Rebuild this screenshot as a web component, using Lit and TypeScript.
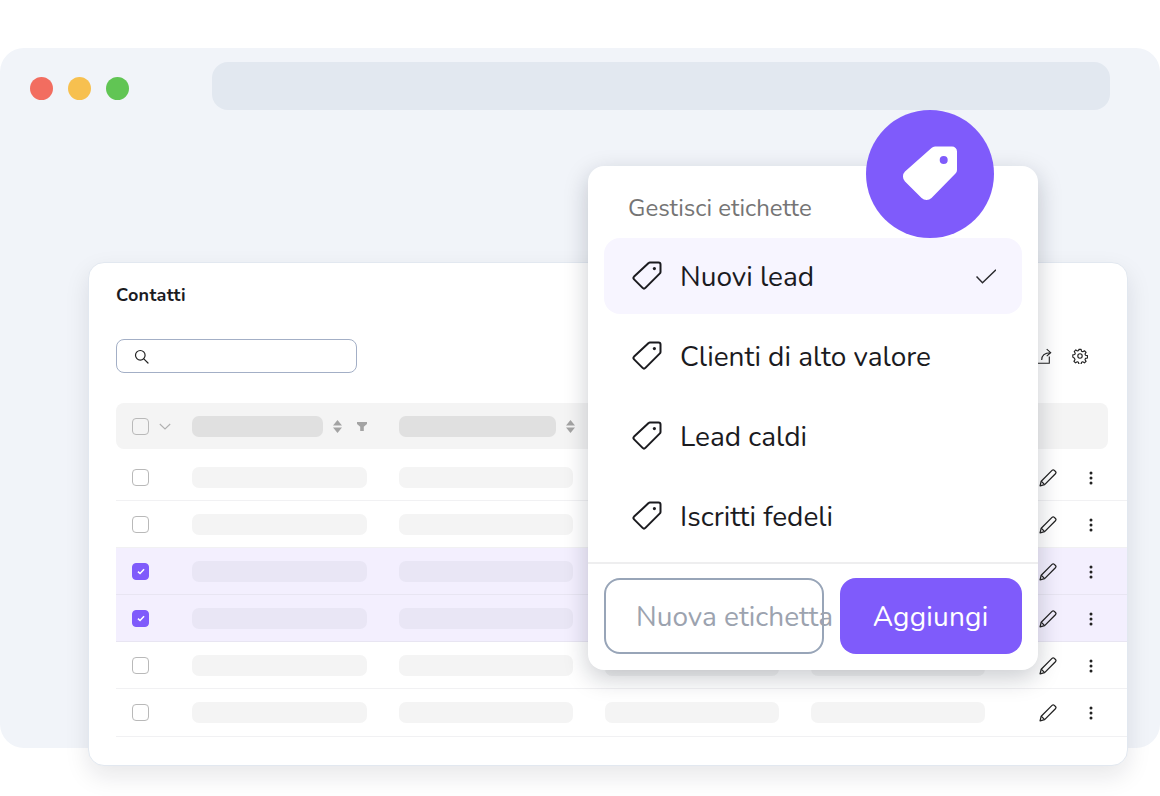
import { LitElement, html, css } from "lit";
import { customElement } from "lit/decorators.js";

const tagOutline = html`<svg class="tag" width="30" height="30" viewBox="0 0 30 30" fill="none" stroke="#1b1b1f" stroke-width="2" stroke-linejoin="round">
  <path d="M18 1.500H26.500a2 2 0 0 1 2 2V11a2 2 0 0 1-.6 1.400L13.400 26.900a2 2 0 0 1-2.800 0L2.100 18.400a2 2 0 0 1 0-2.800L16.600 2.100a2 2 0 0 1 1.400-.6Z"/>
  <circle cx="22.400" cy="7.600" r="1.600" fill="#1b1b1f" stroke="none"/>
</svg>`;

const sortIcon = html`<svg class="ic" width="9" height="13" viewBox="0 0 9 13" fill="#a3a3a3"><path d="M4.500 0 9 5.500H0Z"/><path d="M4.500 13 0 7.500h9Z"/></svg>`;
const filterIcon = html`<svg class="ic filter" width="10" height="9" viewBox="0 0 10 9" fill="#a3a3a3"><path d="M0 0h10v2L6.800 4.800V9H3.200V4.800L0 2Z"/></svg>`;
const pencil = html`<svg width="18" height="18" viewBox="0.500 0.500 17 17" fill="none" stroke="#222" stroke-width="1.200" stroke-linejoin="round"><path d="M1.500 16.500 2.600 12 12.800 1.800a1.600 1.600 0 0 1 2.200 0l1 1a1.600 1.600 0 0 1 0 2.200L5.800 15.300Z"/><path d="M2.600 12 5.800 15.300"/></svg>`;
const dots = html`<svg width="4" height="14" viewBox="0 0 4 14" fill="#222"><circle cx="2" cy="2" r="1.500"/><circle cx="2" cy="7" r="1.500"/><circle cx="2" cy="12" r="1.500"/></svg>`;

const rows = [false, false, true, true, false, false];
const labels = ["Nuovi lead", "Clienti di alto valore", "Lead caldi", "Iscritti fedeli"];

@customElement("app-root")
export class AppRoot extends LitElement {
  static styles = css`
    :host { display: block; width: 1160px; height: 796px; padding-top: 48px; box-sizing: border-box; overflow: hidden; background: #fff; font-family: "Nunito", "Noto Sans", sans-serif; color: #1b1b1f; }
    .window { position: relative; height: 700px; background: #f1f4f9; border-radius: 24px; }
    .chrome { display: flex; align-items: flex-start; padding: 14px 50px 0 30px; }
    .dot { width: 23px; height: 23px; border-radius: 50%; margin: 15px 15px 0 0; }
    .red { background: #f26d60; } .yellow { background: #f7c04f; } .green { background: #61c554; }
    .url { flex: 1; height: 48px; margin-left: 68px; border-radius: 16px; background: #e2e8f0; }
    .card { box-sizing: border-box; width: 1040px; height: 504px; margin: 152px 0 0 88px; padding: 20px 0 0 27px; background: #fff; border: 1px solid #e2e8f0; border-radius: 16px; box-shadow: 0 10px 24px rgba(15,23,42,.10); }
    h2 { margin: 0; font-size: 18px; line-height: 24px; font-weight: 700; letter-spacing: .3px; }
    .toolbar { display: flex; justify-content: space-between; align-items: center; margin: 32px 39px 0 0; height: 34px; }
    .search { box-sizing: border-box; display: flex; align-items: center; width: 241px; height: 34px; padding-left: 17px; border: 1px solid #a3afc6; border-radius: 8px; }
    .tools { display: flex; align-items: center; gap: 20px; }
    .thead, .row { display: grid; grid-template-columns: 76.300px repeat(4, 206.300px) 1fr; align-items: center; }
    .thead { height: 46px; margin: 30px 19px 5px 0; background: #f4f4f4; border-radius: 8px; }
    .row { box-sizing: border-box; height: 47.100px; border-bottom: 1px solid #f1f1f3; }
    .row.sel { background: #f3effe; border-bottom-color: #e8e5f2; }
    .first { display: flex; align-items: center; padding-left: 16px; gap: 10px; }
    .cb { box-sizing: border-box; width: 17px; height: 17px; border: 1.500px solid #b9b9b9; border-radius: 4px; background: #fff; display: flex; align-items: center; justify-content: center; }
    .thead .cb { background: transparent; }
    .cb.on { background: #7f5bfb; border-color: #7f5bfb; }
    .hcell { display: flex; align-items: center; }
    .hbar { height: 21px; border-radius: 7px; background: #e0e0e0; }
    .hcell .ic { flex: none; margin-left: 10.300px; }
    .hcell .ic.filter { margin-left: 14.800px; }
    .bar { width: 174.300px; height: 21px; border-radius: 7px; background: #f4f4f4; }
    .sel .bar { background: #e9e6f5; }
    .actions { display: flex; align-items: center; padding: 1px 0 0 22px; gap: 31.500px; }
    .pop { position: absolute; left: 588px; top: 118px; box-sizing: border-box; width: 450px; height: 504px; padding-top: 25px; background: #fff; border-radius: 16px; box-shadow: 0 8px 24px rgba(15,23,42,.22); display: flex; flex-direction: column; }
    .pop h3 { margin: 0 0 13px 40px; font-size: 24px; line-height: 34px; font-weight: 400; color: #757575; }
    .list { display: flex; flex-direction: column; gap: 4px; padding: 0 16px; }
    .item { display: flex; align-items: center; height: 76px; padding: 0 26px 0 28px; gap: 18px; border-radius: 16px; font-size: 28px; }
    .item span { margin-top: 2px; }
    .item.active { background: #f7f5ff; }
    .item .check { margin-left: auto; }
    .tag { flex: none; }
    .foot { display: flex; gap: 16px; margin-top: 8px; padding: 14px 16px 16px; border-top: 2px solid #eeeeef; }
    .field { box-sizing: border-box; width: 220px; height: 76px; padding: 2px 0 0 30px; border: 2px solid #98a5b8; border-radius: 16px; display: flex; align-items: center; font-size: 28px; color: #9ca3af; white-space: nowrap; }
    .btn { flex: 1; box-sizing: border-box; padding: 2px 1px 0 0; border-radius: 16px; background: #7f5bfb; color: #fff; font-size: 28px; letter-spacing: .2px; display: flex; align-items: center; justify-content: center; }
    .badge { position: absolute; left: 866px; top: 62px; width: 128px; height: 128px; border-radius: 50%; background: #7f5bfb; display: flex; align-items: center; justify-content: center; }
  `;

  render() {
    return html`
      <div class="window">
        <div class="chrome">
          <span class="dot red"></span><span class="dot yellow"></span><span class="dot green"></span>
          <div class="url"></div>
        </div>
        <div class="card">
          <h2>Contatti</h2>
          <div class="toolbar">
            <div class="search">
              <svg width="15" height="15" viewBox="0 0 15 15" fill="none" stroke="#222" stroke-width="1.200"><circle cx="6.300" cy="6.300" r="4.800"/><path d="M9.800 9.800 14 14" stroke-linecap="round"/></svg>
            </div>
            <div class="tools">
              <svg width="15" height="16" viewBox="0 0 15 16" fill="none" stroke="#222" stroke-width="1.100"><path d="M12.300 8.500V15.200H1"/><path d="M4.700 12C4.700 7 7 4.700 13.500 4.700M9.700 1.200l4 3.500-4 3.500"/></svg>
              <svg width="16" height="16" viewBox="0 0 24 24" fill="none" stroke="#222" stroke-width="1.700" stroke-linejoin="round"><circle cx="12" cy="12" r="3.300"/><path d="M10.300 2h3.400l.6 2.900 1.900.8 2.500-1.600 2.400 2.400-1.600 2.500.8 1.900 2.900.6v3.400l-2.900.6-.8 1.900 1.600 2.500-2.400 2.400-2.500-1.600-1.900.8-.6 2.900h-3.400l-.6-2.900-1.900-.8-2.500 1.600-2.400-2.400 1.600-2.500-.8-1.900L1.200 13.700v-3.400l2.900-.6.8-1.900L3.300 5.300l2.400-2.400 2.500 1.600 1.900-.8Z"/></svg>
            </div>
          </div>
          <div class="thead">
            <div class="first">
              <span class="cb"></span>
              <svg width="12" height="7" viewBox="0 0 12 7" fill="none" stroke="#b0b0b0" stroke-width="1.100"><path d="M.8 1 6 6l5.200-5"/></svg>
            </div>
            <div class="hcell"><div class="hbar" style="width:130.700px"></div>${sortIcon}${filterIcon}</div>
            <div class="hcell"><div class="hbar" style="width:157.600px"></div>${sortIcon}</div>
          </div>
          ${rows.map((on) => html`
            <div class="row ${on ? "sel" : ""}">
              <div class="first">
                <span class="cb ${on ? "on" : ""}">
                  ${on ? html`<svg width="8" height="7" viewBox="0 0 9 8" fill="none" stroke="#fff" stroke-width="1.800"><path d="M1 4.200 3.400 6.300 8 1.500"/></svg>` : ""}
                </span>
              </div>
              <div class="bar"></div><div class="bar"></div><div class="bar"></div><div class="bar"></div>
              <div class="actions">${pencil}${dots}</div>
            </div>`)}
        </div>
        <div class="pop">
          <h3>Gestisci etichette</h3>
          <div class="list">
            ${labels.map((l, i) => html`
              <div class="item ${i === 0 ? "active" : ""}">
                ${tagOutline}<span>${l}</span>
                ${i === 0 ? html`<svg class="check" width="20" height="15" viewBox="0 0 20 15" fill="none" stroke="#2a2a2e" stroke-width="1.500"><path d="M.5 7.500 6.500 13.800 20 .8"/></svg>` : ""}
              </div>`)}
          </div>
          <div class="foot">
            <div class="field">Nuova etichetta</div>
            <div class="btn">Aggiungi</div>
          </div>
        </div>
        <div class="badge">
          <svg width="56" height="56" viewBox="0 0 56 56" fill="#fff"><path fill-rule="evenodd" d="M33 .5H50a5 5 0 0 1 5 5V24a5 5 0 0 1-1.500 3.500L29.500 52a7 7 0 0 1-9.900 0L3 35.500a7 7 0 0 1 0-9.900L29.500 2A5 5 0 0 1 33 .5ZM41.700 10a4 4 0 1 0 0 8 4 4 0 0 0 0-8Z"/></svg>
        </div>
      </div>
    `;
  }
}
